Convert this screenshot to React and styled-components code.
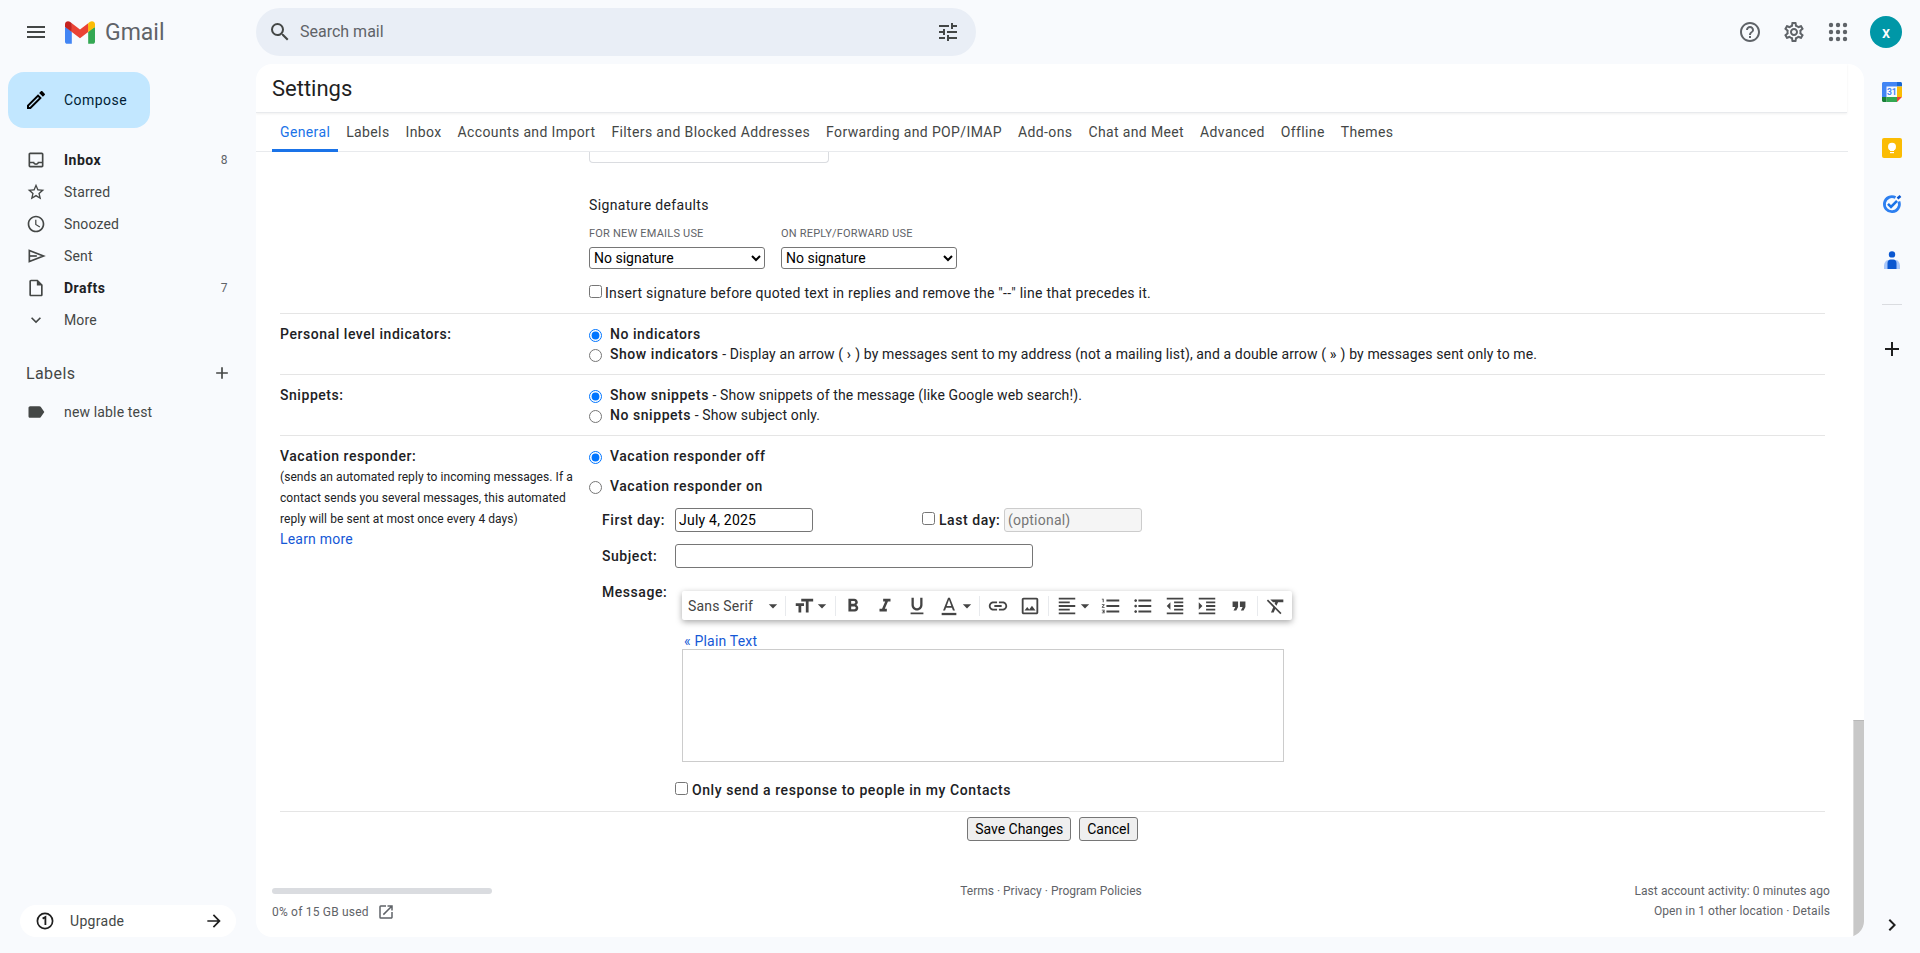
import React from 'react'
import styled, { createGlobalStyle } from 'styled-components'
import {
  MdMenu, MdSearch, MdTune, MdHelpOutline, MdOutlineSettings, MdOutlineEdit, MdOutlineInbox,
  MdOutlineStarBorder, MdOutlineAccessTime, MdOutlineInsertDriveFile, MdExpandMore, MdAdd, MdLabel,
  MdArrowForward, MdOutlineOpenInNew, MdFormatBold, MdFormatItalic, MdFormatUnderlined, MdLink,
  MdOutlineImage, MdFormatAlignLeft, MdFormatListNumbered, MdFormatListBulleted, MdFormatIndentDecrease,
  MdFormatIndentIncrease, MdFormatQuote, MdFormatClear, MdFormatSize, MdArrowDropDown, MdChevronRight,
} from 'react-icons/md'

const GlobalStyle = createGlobalStyle`
  html, body { margin: 0; height: 100%; }
  body { background: #f8fafd; font-family: Roboto, "Liberation Sans", sans-serif; color: #202124; overflow: hidden; }
`

const Page = styled.div`
  height: 953px;
  display: flex;
  flex-direction: column;
  overflow: hidden;
`

/* top bar */
const Header = styled.header`
  height: 64px;
  flex: none;
  display: flex;
  align-items: center;
  padding-right: 18px;
`
const Brand = styled.div`
  width: 256px;
  flex: none;
  display: flex;
  align-items: center;
  padding-left: 24px;
  box-sizing: border-box;
  color: #444746;
`
const LogoSvg = styled.svg`
  width: 30px;
  height: 23px;
  margin-left: 17px;
`
const BrandName = styled.span`
  margin-left: 10px;
  font-size: 23px;
  color: #5f6368;
`
const Search = styled.div`
  width: 720px;
  height: 48px;
  display: flex;
  align-items: center;
  gap: 8px;
  padding: 0 16px 0 12px;
  box-sizing: border-box;
  border-radius: 24px;
  background: #e9eef6;
  color: #444746;
  font-size: 16px;
`
const SearchText = styled.span`
  flex: 1;
  margin-bottom: 2px;
  color: #5f6368;
`
const HeaderTools = styled.div`
  margin-left: auto;
  display: flex;
  align-items: center;
`
const ToolSlot = styled.div`
  width: 44px;
  display: flex;
  justify-content: center;
  color: #5f6368;
`
const Avatar = styled.div`
  width: 32px;
  height: 32px;
  margin-left: 10px;
  border-radius: 50%;
  background: #0097a7;
  color: #fff;
  font-size: 16px;
  font-weight: 500;
  display: flex;
  align-items: center;
  justify-content: center;
`

const Body = styled.div`
  flex: 1;
  min-height: 0;
  display: flex;
`

/* left column */
const Sidebar = styled.aside`
  width: 256px;
  flex: none;
  display: flex;
  flex-direction: column;
  padding-bottom: 16px;
  box-sizing: border-box;
`
const Compose = styled.div`
  width: 142px;
  height: 56px;
  margin: 8px 0 16px 8px;
  display: flex;
  align-items: center;
  gap: 16px;
  padding-left: 16px;
  box-sizing: border-box;
  border-radius: 16px;
  background: #c2e7ff;
  color: #001d35;
  font-size: 14px;
  letter-spacing: 0.45px;
`
const NavRow = styled.div`
  height: 32px;
  display: flex;
  align-items: center;
  gap: 18px;
  padding: 0 28px 0 26px;
  font-size: 14px;
  letter-spacing: ${p => (p.$bold ? '0.5px' : '0.15px')};
  color: ${p => (p.$bold ? '#202124' : '#444746')};
  font-weight: ${p => (p.$bold ? 700 : 400)};
`
const NavIcon = styled.span`
  width: 20px;
  height: 20px;
  flex: none;
  display: flex;
  align-items: center;
  justify-content: center;
  color: #444746;
`
const NavCount = styled.span`
  margin-left: auto;
  font-size: 12px;
  font-weight: 400;
  color: #5f6368;
`
const LabelsHead = styled.div`
  height: 32px;
  margin-top: 21px;
  margin-bottom: 7px;
  display: flex;
  align-items: center;
  justify-content: space-between;
  padding: 0 24px 0 26px;
  font-size: 16px;
  letter-spacing: 0.4px;
  color: #444746;
`
const Upgrade = styled.div`
  width: 216px;
  height: 32px;
  margin: auto 0 0 20px;
  display: flex;
  align-items: center;
  gap: 16px;
  padding: 0 12px 0 16px;
  box-sizing: border-box;
  border-radius: 16px;
  background: #fff;
  font-size: 14px;
  letter-spacing: 0.3px;
  color: #444746;
`
const ArrowSlot = styled.span`
  margin-left: auto;
  display: flex;
  color: #1f1f1f;
`

/* settings card */
const Card = styled.main`
  position: relative;
  width: 1608px;
  flex: none;
  margin-bottom: 16px;
  display: flex;
  flex-direction: column;
  overflow: hidden;
  border-radius: 16px;
  background: #fff;
`
const TitleBar = styled.div`
  height: 48px;
  margin-right: 17px;
  display: flex;
  align-items: center;
  padding-left: 16px;
  font-size: 22px;
  color: #1f1f1f;
  border-bottom: 1px solid #e8eaed;
  box-shadow: 0 1px 2px rgba(60, 64, 67, 0.08);
`
const Tabs = styled.nav`
  height: 38px;
  margin-right: 16px;
  display: flex;
  padding-left: 16px;
  border-bottom: 1px solid #e8eaed;
`
const Tab = styled.div`
  height: 39px;
  padding: 1px 8px 0;
  box-sizing: border-box;
  display: flex;
  align-items: center;
  font-size: 14px;
  letter-spacing: 0.37px;
  white-space: nowrap;
  color: ${p => (p.$active ? '#1a73e8' : '#444746')};
  border-bottom: 3px solid ${p => (p.$active ? '#1a73e8' : 'transparent')};
`
const Pane = styled.div`
  flex: 1;
  min-height: 0;
  overflow: hidden;
`
const ScrollThumb = styled.div`
  position: absolute;
  right: 0;
  bottom: 0;
  width: 11px;
  height: 217px;
  box-sizing: border-box;
  background: #c8c8c8;
  border-top: 1px solid #b8b8b8;
  border-left: 1px solid #dcdcdc;
`

const Row = styled.section`
  margin: 0 39px 0 24px;
  display: grid;
  grid-template-columns: 309px 1fr;
  padding: 10px 0;
  border-bottom: 1px solid #e5e5e5;
  font-size: 14px;
  line-height: 20px;
  letter-spacing: 0.22px;
`
const SignatureRow = styled(Row)`
  padding-top: 0;
`
const RowLabel = styled.div`
  font-weight: 500;
  letter-spacing: 0.55px;
`
const Hint = styled.div`
  margin: 1px 0 -1px;
  font-weight: 400;
  font-size: 12px;
  line-height: 21px;
  letter-spacing: 0.07px;
  width: 300px;
`
const Link = styled.span`
  color: #1558d6;
  font-weight: 400;
  letter-spacing: 0.2px;
`
const ClippedBox = styled.div`
  width: 240px;
  height: 11px;
  box-sizing: border-box;
  border: 1px solid #dadce0;
  border-top: none;
  border-radius: 0 0 4px 4px;
`
const SigTitle = styled.div`
  margin-top: 32px;
  letter-spacing: 0.35px;
`
const SigSelects = styled.div`
  display: flex;
  margin-top: 11px;
`
const SigColumn = styled.div`
  width: 192px;
`
const TinyCaps = styled.div`
  font-size: 11px;
  line-height: 16px;
  letter-spacing: 0.2px;
  color: #5f6368;
`
const NativeSelect = styled.select`
  display: block;
  width: 176px;
  height: 22px;
  margin-top: 5px;
  font: 14px Roboto, sans-serif;
  background: #fff;
  border: 1px solid #767676;
  border-radius: 3px;
  color: #000;
`
const CheckLine = styled.label`
  display: flex;
  align-items: center;
  gap: ${p => (p.$bold ? 4 : 3)}px;
  margin-top: ${p => p.$top || 0}px;
  margin-bottom: ${p => p.$bottom || 0}px;
  padding-left: ${p => p.$indent || 0}px;
  font-weight: ${p => (p.$bold ? 500 : 400)};
  letter-spacing: ${p => (p.$bold ? '0.58px' : '0.25px')};
  white-space: nowrap;
`
const Check = styled.input.attrs({ type: 'checkbox' })`
  width: 13px;
  height: 13px;
  margin: 0 0 3px;
  flex: none;
`
const Radio = styled.input.attrs({ type: 'radio' })`
  width: 13px;
  height: 13px;
  margin: 2px 8px 0 0;
  flex: none;
`
const RadioLine = styled.label`
  display: flex;
  align-items: center;
  margin-top: ${p => p.$top || 0}px;
  letter-spacing: 0.12px;
`
const Strong = styled.b`
  font-weight: 500;
  letter-spacing: 0.55px;
`
const FieldRow = styled.div`
  display: flex;
  align-items: ${p => (p.$start ? 'flex-start' : 'center')};
  margin-top: 12px;
  padding-left: 13px;
  font-weight: 500;
  letter-spacing: 0.55px;
`
const FieldLabel = styled.span`
  width: 73px;
  flex: none;
  margin-top: ${p => (p.$start ? '2px' : 0)};
`
const TextInput = styled.input`
  width: ${p => p.$w}px;
  height: 24px;
  box-sizing: border-box;
  padding: 0 3px;
  font: 14px Roboto, sans-serif;
  color: #000;
  letter-spacing: 0.22px;
  background: ${p => (p.disabled ? '#f5f5f5' : '#fff')};
  border: 1px solid ${p => (p.disabled ? '#ccc' : '#767676')};
  border-radius: 3px;
  &::placeholder { color: #757575; }
`
const LastDay = styled.label`
  width: 79px;
  flex: none;
  display: flex;
  align-items: center;
  gap: 4px;
  margin-left: 109px;
  white-space: nowrap;
`
const LastInput = styled(TextInput)`
  margin-left: 3px;
`
const Composer = styled.div`
  margin-left: 7px;
  display: flex;
  flex-direction: column;
  font-weight: 400;
  letter-spacing: 0.2px;
`
const Toolbar = styled.div`
  width: 610px;
  height: 29px;
  margin-top: 11px;
  display: flex;
  align-items: center;
  border-radius: 2px;
  background: #fff;
  box-shadow: 0 2px 6px rgba(0, 0, 0, 0.35);
  color: #444;
`
const ToolButton = styled.span`
  width: ${p => p.$w || 32}px;
  margin-left: ${p => p.$lead || 0}px;
  flex: none;
  display: flex;
  align-items: center;
  justify-content: center;
  svg { flex: none; }
`
const FontPicker = styled.span`
  width: 103px;
  flex: none;
  box-sizing: border-box;
  display: flex;
  align-items: center;
  justify-content: space-between;
  padding: 0 2px 0 6px;
  font-size: 14px;
  letter-spacing: 0.2px;
`
const ToolSep = styled.span`
  width: 1px;
  height: 20px;
  flex: none;
  margin-left: ${p => p.$lead || 0}px;
  background: #e8eaed;
`
const PlainLink = styled(Link)`
  margin: 14px 0 0 2px;
  line-height: 15px;
`
const MessageBox = styled.div`
  width: 602px;
  height: 113px;
  box-sizing: border-box;
  border: 1px solid #ccc;
`
const ActionRow = styled.div`
  margin: 5px 39px 0 24px;
  display: flex;
  justify-content: center;
  gap: 8px;
`
const NativeButton = styled.button`
  height: 24px;
  box-sizing: border-box;
  padding: 0 7px;
  font: 14px Roboto, sans-serif;
  color: #000;
  background: #efefef;
  border: 1px solid #767676;
  border-radius: 3px;
`
const Footer = styled.footer`
  margin-top: 40px;
  padding: 0 34px 0 16px;
  display: grid;
  grid-template-columns: 1fr auto 1fr;
  font-size: 12px;
  line-height: 20px;
  color: #5f6368;
`
const Storage = styled.div`
  padding-top: 7px;
  letter-spacing: 0.2px;
`
const StorageBar = styled.div`
  width: 220px;
  height: 6px;
  border-radius: 3px;
  background: #dadce0;
`
const StorageText = styled.div`
  margin-top: 8px;
  display: flex;
  align-items: center;
  gap: 8px;
`
const Activity = styled.div`
  text-align: right;
  letter-spacing: 0.1px;
`

/* right rail */
const Rail = styled.aside`
  flex: 1;
  display: flex;
  flex-direction: column;
  align-items: center;
  padding-bottom: 16px;
`
const RailItem = styled.div`
  height: 56px;
  width: 100%;
  flex: none;
  display: flex;
  align-items: center;
  justify-content: center;
  color: #1f1f1f;
`
const RailDivider = styled.div`
  width: 20px;
  height: 1px;
  margin: 16px 0;
  background: #dadce0;
`
const RailBottom = styled.div`
  margin-top: auto;
  display: flex;
  color: #1f1f1f;
`

const tabs = ['General', 'Labels', 'Inbox', 'Accounts and Import', 'Filters and Blocked Addresses', 'Forwarding and POP/IMAP', 'Add-ons', 'Chat and Meet', 'Advanced', 'Offline', 'Themes']

const SentIcon = () => (
  <svg width="20" height="20" viewBox="0 0 24 24" fill="none" stroke="currentColor" strokeWidth="2" strokeLinejoin="miter">
    <path d="M4 5.5 21 12 4 18.5V5.5Z" />
    <path d="M4 12h9" />
  </svg>
)

const GmailLogo = () => (
  <LogoSvg viewBox="0 0 256 193">
    <path fill="#4285F4" d="M58.182 192.05V93.14L27.507 65.077 0 49.504v125.091c0 9.658 7.825 17.455 17.455 17.455h40.727Z" />
    <path fill="#34A853" d="M197.818 192.05h40.727c9.659 0 17.455-7.826 17.455-17.455V49.505l-31.156 17.837-27.026 25.798v98.91Z" />
    <path fill="#EA4335" d="m58.182 93.14-4.174-38.647 4.174-36.989L128 69.868l69.818-52.364 4.669 34.992-4.669 40.644L128 145.504z" />
    <path fill="#FBBC04" d="M197.818 17.504V93.14L256 49.504V26.231c0-21.585-24.64-33.89-41.89-20.945l-16.292 12.218Z" />
    <path fill="#C5221F" d="M0 49.504l26.759 20.07L58.182 93.14V17.504L41.89 5.286C24.61-7.66 0 4.646 0 26.23v23.273Z" />
  </LogoSvg>
)

const AppsIcon = () => (
  <svg width="24" height="24" viewBox="0 0 24 24" fill="currentColor">
    {[5, 12, 19].map(y => [5, 12, 19].map(x => <circle key={`${x}-${y}`} cx={x} cy={y} r="2.2" />))}
  </svg>
)

const OneIcon = () => (
  <svg width="18" height="18" viewBox="0 0 18 18" fill="none" stroke="#1f1f1f">
    <circle cx="9" cy="9" r="7.6" strokeWidth="1.7" />
    <path d="M6.6 6.6 9.4 5v8" strokeWidth="1.8" />
  </svg>
)

const CalendarLogo = () => (
  <svg width="20" height="20" viewBox="0 0 20 20">
    <path fill="#4285f4" d="M1.5 0H15v4.5H4.5V15H0V1.5C0 .7.7 0 1.5 0Z" />
    <path fill="#1967d2" d="M15 0h3.5c.8 0 1.5.7 1.5 1.5V4.5h-5Z" />
    <path fill="#fbbc04" d="M15 4.5h5V15h-5Z" />
    <path fill="#34a853" d="M4.5 15H15v5H4.5Z" />
    <path fill="#188038" d="M0 15h4.5v5H1.5C.7 20 0 19.3 0 18.5Z" />
    <path fill="#ea4335" d="M15 15h5l-5 5Z" />
    <text x="9.8" y="12.6" textAnchor="middle" fontSize="8.5" fontWeight="700" fontFamily="Roboto, sans-serif" fill="#4285f4">31</text>
  </svg>
)

const KeepLogo = () => (
  <svg width="20" height="20" viewBox="0 0 20 20">
    <rect width="20" height="20" rx="2" fill="#fbbc04" />
    <circle cx="10" cy="8.7" r="4" fill="#fff" />
    <rect x="8" y="11" width="4" height="2" fill="#fff" />
    <rect x="8" y="14" width="4" height="1.2" fill="#fff" />
  </svg>
)

const TasksLogo = () => (
  <svg width="20" height="20" viewBox="0 0 20 20" fill="none">
    <path d="M16.9 7.5a7.5 7.5 0 1 1-3.4-3.9" stroke="#2d7ff0" strokeWidth="2.8" />
    <path d="m6 9.8 3 3 6-6" stroke="#1a73e8" strokeWidth="2.6" />
    <path d="m15.5 4.5 3-2.5" stroke="#0b57d0" strokeWidth="2.6" />
  </svg>
)

const ContactsLogo = () => (
  <svg width="16" height="18" viewBox="0 0 16 18">
    <circle cx="8" cy="3.4" r="3.2" fill="#0b57d0" />
    <path fill="#a8c7fa" d="M0 18v-3c0-3 2-6 4-6h8c2 0 4 3 4 6v3Z" />
    <path fill="#0b57d0" d="M3.5 18v-6c0-2 1.5-3.4 3-3.4h3c1.5 0 3 1.4 3 3.4v6Z" />
  </svg>
)

const TextColorIcon = () => (
  <svg width="22" height="22" viewBox="0 0 24 24" fill="currentColor">
    <path d="M11 3 5.5 17h2.2l1.1-3h6.4l1.1 3h2.2L13 3h-2Zm-1.500 9L12 5.300 14.500 12h-5Z" />
    <rect x="4" y="19.5" width="16" height="2.5" />
  </svg>
)

const Tool = ({ icon: Icon, lead }) => <ToolButton $lead={lead}><Icon size={22} /></ToolButton>
const CaretTool = ({ w = 4 }) => <ToolButton $w={w}><MdArrowDropDown size={20} /></ToolButton>

const App = () => (
  <Page>
    <GlobalStyle />
    <Header>
      <Brand>
        <MdMenu size={24} />
        <GmailLogo />
        <BrandName>Gmail</BrandName>
      </Brand>
      <Search>
        <MdSearch size={24} />
        <SearchText>Search mail</SearchText>
        <MdTune size={24} />
      </Search>
      <HeaderTools>
        <ToolSlot><MdHelpOutline size={24} /></ToolSlot>
        <ToolSlot><MdOutlineSettings size={24} /></ToolSlot>
        <ToolSlot><AppsIcon /></ToolSlot>
        <Avatar>x</Avatar>
      </HeaderTools>
    </Header>
    <Body>
      <Sidebar>
        <Compose><MdOutlineEdit size={24} color="#000" />Compose</Compose>
        <NavRow $bold><NavIcon><MdOutlineInbox size={20} /></NavIcon>Inbox<NavCount>8</NavCount></NavRow>
        <NavRow><NavIcon><MdOutlineStarBorder size={20} /></NavIcon>Starred</NavRow>
        <NavRow><NavIcon><MdOutlineAccessTime size={20} /></NavIcon>Snoozed</NavRow>
        <NavRow><NavIcon><SentIcon /></NavIcon>Sent</NavRow>
        <NavRow $bold><NavIcon><MdOutlineInsertDriveFile size={20} /></NavIcon>Drafts<NavCount>7</NavCount></NavRow>
        <NavRow><NavIcon><MdExpandMore size={20} /></NavIcon>More</NavRow>
        <LabelsHead>Labels<MdAdd size={20} /></LabelsHead>
        <NavRow><NavIcon><MdLabel size={20} /></NavIcon>new lable test</NavRow>
        <Upgrade>
          <OneIcon />
          Upgrade
          <ArrowSlot><MdArrowForward size={20} /></ArrowSlot>
        </Upgrade>
      </Sidebar>

      <Card>
        <TitleBar>Settings</TitleBar>
        <Tabs>
          {tabs.map((t, i) => <Tab key={t} $active={i === 0}>{t}</Tab>)}
        </Tabs>
        <Pane>
          <SignatureRow>
            <div />
            <div>
              <ClippedBox />
              <SigTitle>Signature defaults</SigTitle>
              <SigSelects>
                <SigColumn>
                  <TinyCaps>FOR NEW EMAILS USE</TinyCaps>
                  <NativeSelect><option>No signature</option></NativeSelect>
                </SigColumn>
                <SigColumn>
                  <TinyCaps>ON REPLY/FORWARD USE</TinyCaps>
                  <NativeSelect><option>No signature</option></NativeSelect>
                </SigColumn>
              </SigSelects>
              <CheckLine $top={14}>
                <Check />
                Insert signature before quoted text in replies and remove the "--" line that precedes it.
              </CheckLine>
            </div>
          </SignatureRow>

          <Row>
            <RowLabel>Personal level indicators:</RowLabel>
            <div>
              <RadioLine><Radio name="pli" defaultChecked /><Strong>No indicators</Strong></RadioLine>
              <RadioLine>
                <Radio name="pli" />
                <span><Strong>Show indicators</Strong> - Display an arrow ( <Strong>›</Strong> ) by messages sent to my address (not a mailing list), and a double arrow ( <Strong>»</Strong> ) by messages sent only to me.</span>
              </RadioLine>
            </div>
          </Row>

          <Row>
            <RowLabel>Snippets:</RowLabel>
            <div>
              <RadioLine><Radio name="snip" defaultChecked /><span><Strong>Show snippets</Strong> - Show snippets of the message (like Google web search!).</span></RadioLine>
              <RadioLine><Radio name="snip" /><span><Strong>No snippets</Strong> - Show subject only.</span></RadioLine>
            </div>
          </Row>

          <Row>
            <RowLabel>
              Vacation responder:
              <Hint>(sends an automated reply to incoming messages. If a contact sends you several messages, this automated reply will be sent at most once every 4 days)</Hint>
              <Link>Learn more</Link>
            </RowLabel>
            <div>
              <RadioLine><Radio name="vac" defaultChecked /><Strong>Vacation responder off</Strong></RadioLine>
              <RadioLine $top={10}><Radio name="vac" /><Strong>Vacation responder on</Strong></RadioLine>
              <FieldRow>
                <FieldLabel>First day:</FieldLabel>
                <TextInput $w={138} defaultValue="July 4, 2025" />
                <LastDay><Check />Last day:</LastDay>
                <LastInput $w={138} disabled placeholder="(optional)" />
              </FieldRow>
              <FieldRow>
                <FieldLabel>Subject:</FieldLabel>
                <TextInput $w={358} />
              </FieldRow>
              <FieldRow $start>
                <FieldLabel $start>Message:</FieldLabel>
                <Composer>
                  <Toolbar>
                    <FontPicker>Sans Serif<MdArrowDropDown size={20} /></FontPicker>
                    <ToolSep />
                    <ToolButton $w={22} $lead={7}><MdFormatSize size={22} /></ToolButton>
                    <CaretTool w={14} />
                    <ToolSep $lead={6} />
                    <Tool icon={MdFormatBold} lead={1} />
                    <Tool icon={MdFormatItalic} />
                    <Tool icon={MdFormatUnderlined} />
                    <ToolButton><TextColorIcon /></ToolButton>
                    <CaretTool />
                    <ToolSep $lead={10} />
                    <Tool icon={MdLink} lead={2} />
                    <Tool icon={MdOutlineImage} />
                    <ToolSep $lead={2} />
                    <Tool icon={MdFormatAlignLeft} lead={2} />
                    <CaretTool />
                    <Tool icon={MdFormatListNumbered} lead={8} />
                    <Tool icon={MdFormatListBulleted} />
                    <Tool icon={MdFormatIndentDecrease} />
                    <Tool icon={MdFormatIndentIncrease} />
                    <Tool icon={MdFormatQuote} />
                    <ToolSep $lead={2} />
                    <Tool icon={MdFormatClear} lead={2} />
                  </Toolbar>
                  <PlainLink>« Plain Text</PlainLink>
                  <MessageBox />
                </Composer>
              </FieldRow>
              <CheckLine $top={18} $bottom={1} $indent={86} $bold>
                <Check />
                Only send a response to people in my Contacts
              </CheckLine>
            </div>
          </Row>

          <ActionRow>
            <NativeButton>Save Changes</NativeButton>
            <NativeButton>Cancel</NativeButton>
          </ActionRow>

          <Footer>
            <Storage>
              <StorageBar />
              <StorageText>0% of 15 GB used<MdOutlineOpenInNew size={18} /></StorageText>
            </Storage>
            <div>Terms · Privacy · Program Policies</div>
            <Activity>
              Last account activity: 0 minutes ago
              <br />
              Open in 1 other location · Details
            </Activity>
          </Footer>
        </Pane>
        <ScrollThumb />
      </Card>

      <Rail>
        <RailItem><CalendarLogo /></RailItem>
        <RailItem><KeepLogo /></RailItem>
        <RailItem><TasksLogo /></RailItem>
        <RailItem><ContactsLogo /></RailItem>
        <RailDivider />
        <RailItem><MdAdd size={24} /></RailItem>
        <RailBottom><MdChevronRight size={24} /></RailBottom>
      </Rail>
    </Body>
  </Page>
)

export default App
